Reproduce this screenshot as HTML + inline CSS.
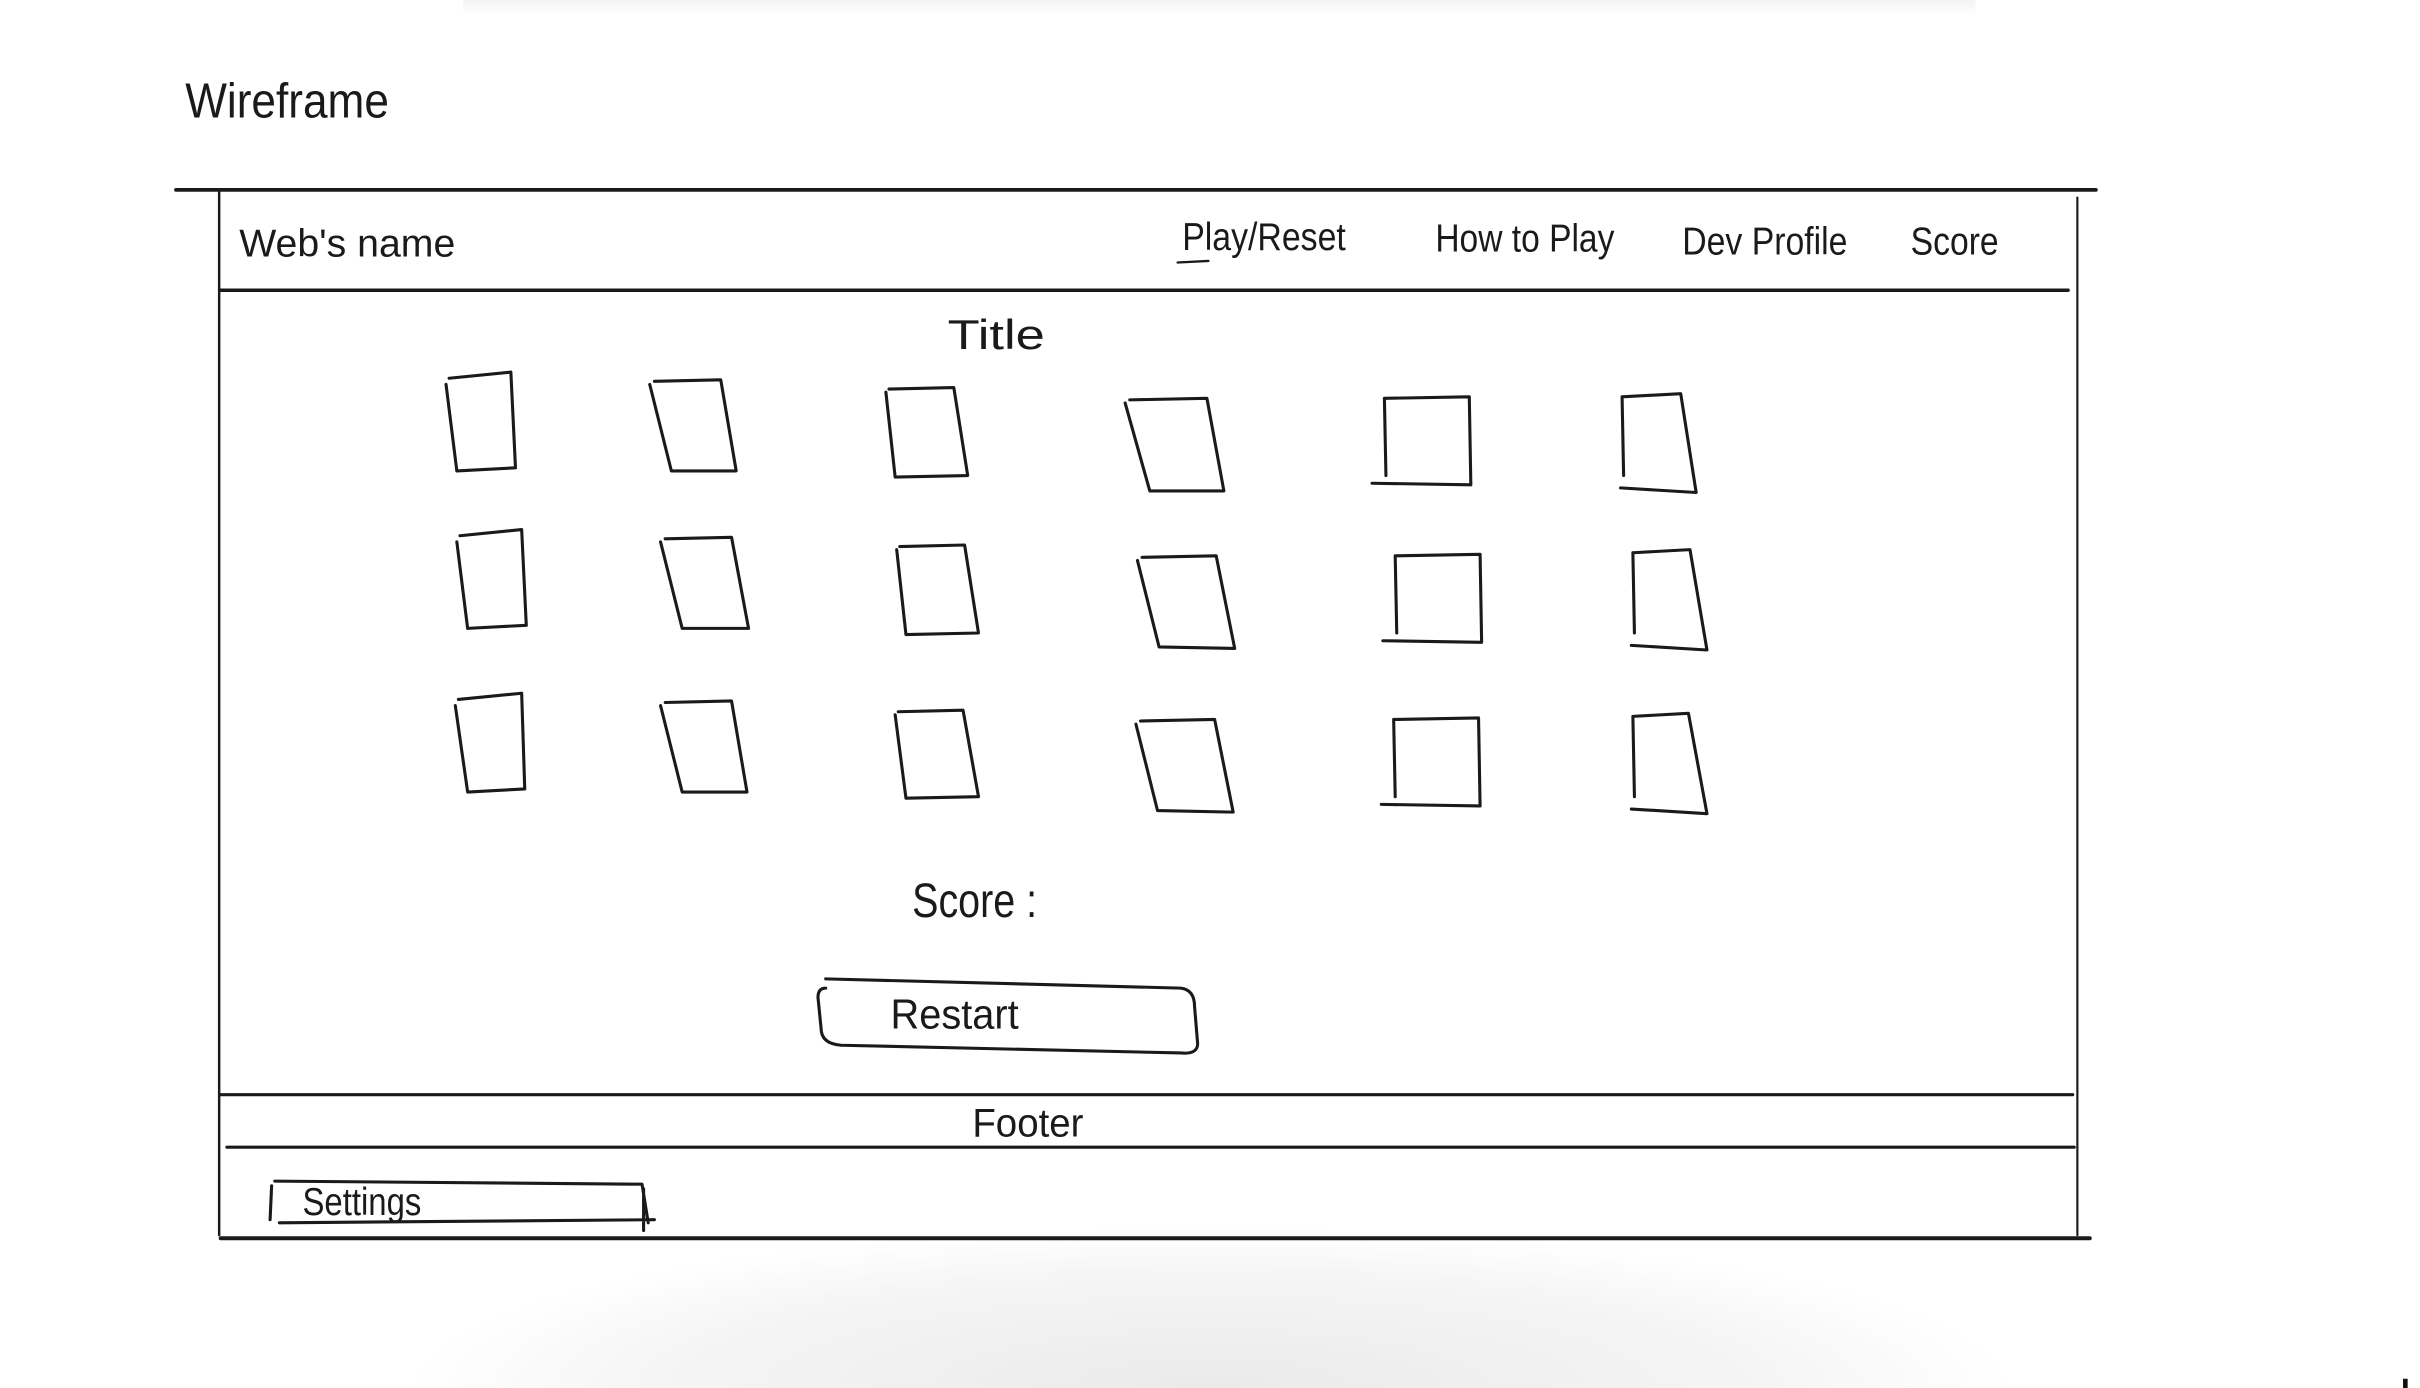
<!DOCTYPE html>
<html><head><meta charset="utf-8">
<style>
html,body{margin:0;padding:0;background:#fff;width:2420px;height:1388px;overflow:hidden}
svg{display:block}
text{font-family:"Liberation Sans",sans-serif;fill:#1a1a1a}
</style></head>
<body>
<svg width="2420" height="1388" viewBox="0 0 1568 899" preserveAspectRatio="none">
<defs>
<radialGradient id="g" cx="784" cy="899" r="520" gradientUnits="userSpaceOnUse" gradientTransform="translate(0,899) scale(1,0.2) translate(0,-899)">
<stop offset="0" stop-color="#eaeaea"/>
<stop offset="0.7" stop-color="#f5f5f5"/>
<stop offset="1" stop-color="#fff"/>
</radialGradient>
<linearGradient id="t" x1="0" y1="0" x2="0" y2="1">
<stop offset="0" stop-color="#f3f3f3"/><stop offset="1" stop-color="#fff"/>
</linearGradient>
</defs>
<rect x="0" y="0" width="1568" height="899" fill="#fff"/>
<rect x="300" y="0" width="980" height="10" fill="url(#t)"/>
<rect x="0" y="790" width="1568" height="109" fill="url(#g)"/>
<g stroke="#1a1a1a" fill="none" stroke-width="2" stroke-linecap="round" stroke-linejoin="round">
<line x1="114" y1="123" x2="1358" y2="123" stroke-width="2.4"/>
<line x1="142" y1="123" x2="142" y2="800" stroke-width="1.6"/>
<line x1="1346" y1="128" x2="1346" y2="800" stroke-width="1.4"/>
<line x1="143" y1="188" x2="1340" y2="188" stroke-width="2.2"/>
<line x1="143" y1="709" x2="1343" y2="709" stroke-width="2"/>
<line x1="147" y1="743" x2="1344" y2="743" stroke-width="2"/>
<line x1="143" y1="802" x2="1354" y2="802" stroke-width="2.6"/>
<path d="M291 245 L331 241 L334 303 L296 305 L289 249"/>
<path d="M424 247 L467 246 L477 305 L435 305 L421 249"/>
<path d="M576 252 L618 251 L627 308 L580 309 L574 254"/>
<path d="M732 259 L782 258 L793 318 L745 318 L729 261"/>
<path d="M897 258 L952 257 L953 314 L889 313 M897 258 L898 308"/>
<path d="M1051 257 L1089 255 L1099 319 L1050 316 M1051 257 L1052 308"/>
<path d="M298 347 L338 343 L341 405 L303 407 L296 351"/>
<path d="M431 349 L474 348 L485 407 L442 407 L428 351"/>
<path d="M583 354 L625 353 L634 410 L587 411 L581 356"/>
<path d="M740 361 L788 360 L800 420 L751 419 L737 363"/>
<path d="M904 360 L959 359 L960 416 L896 415 M904 360 L905 410"/>
<path d="M1058 358 L1095 356 L1106 421 L1057 418 M1058 358 L1059 410"/>
<path d="M297 453 L338 449 L340 511 L303 513 L295 457"/>
<path d="M431 455 L474 454 L484 513 L442 513 L428 457"/>
<path d="M582 461 L624 460 L634 516 L587 517 L580 463"/>
<path d="M739 467 L787 466 L799 526 L750 525 L736 469"/>
<path d="M903 466 L958 465 L959 522 L895 521 M903 466 L904 516"/>
<path d="M1058 464 L1094 462 L1106 527 L1057 524 M1058 464 L1059 516"/>
<path d="M535 634 L765 640 Q774 641 774 652 L776 676 Q776 683 765 682 L545 677 Q532 676 532 666 L530 646 Q530 640 535 640"/>
<path d="M178 765 L416 767 L420 792 M181 792 L424 790 M176 768 L175 790 M417 770 L417 797"/>
<line x1="763" y1="170" x2="783" y2="169" stroke-width="1.5"/>
</g>
<g lengthAdjust="spacingAndGlyphs">
<text x="120" y="76" font-size="32" textLength="132" lengthAdjust="spacingAndGlyphs">Wireframe</text>
<text x="155" y="166" font-size="25" textLength="140" lengthAdjust="spacingAndGlyphs">Web's name</text>
<text x="766" y="162" font-size="25" textLength="106" lengthAdjust="spacingAndGlyphs">Play/Reset</text>
<text x="930" y="163" font-size="25" textLength="116" lengthAdjust="spacingAndGlyphs">How to Play</text>
<text x="1090" y="165" font-size="25" textLength="107" lengthAdjust="spacingAndGlyphs">Dev Profile</text>
<text x="1238" y="165" font-size="25" textLength="57" lengthAdjust="spacingAndGlyphs">Score</text>
<text x="614" y="226" font-size="27" textLength="63" lengthAdjust="spacingAndGlyphs">Title</text>
<text x="591" y="594" font-size="31" textLength="81" lengthAdjust="spacingAndGlyphs">Score :</text>
<text x="577" y="666" font-size="27" textLength="83" lengthAdjust="spacingAndGlyphs">Restart</text>
<text x="630" y="736" font-size="26" textLength="72" lengthAdjust="spacingAndGlyphs">Footer</text>
<text x="196" y="787" font-size="25" textLength="77" lengthAdjust="spacingAndGlyphs">Settings</text>
</g>
<rect x="1557" y="893" width="3" height="6" fill="#111"/>
</svg>
</body></html>
